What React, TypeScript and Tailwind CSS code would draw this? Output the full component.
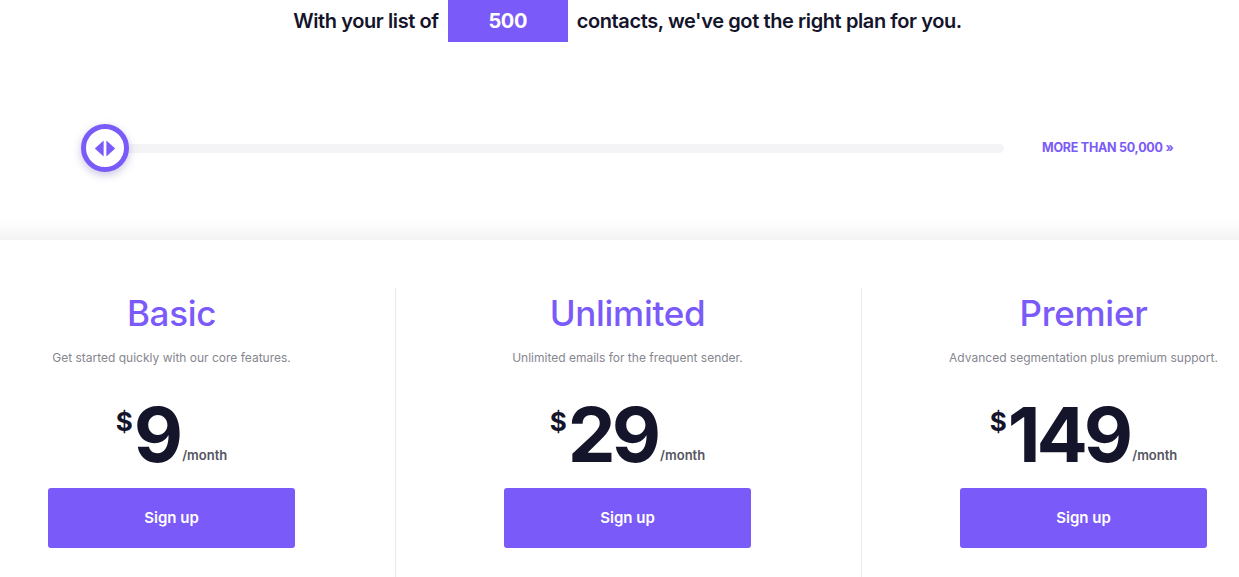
import { useState } from 'react'

const plans = [
  { name: 'Basic', desc: 'Get started quickly with our core features.', price: '9' },
  { name: 'Unlimited', desc: 'Unlimited emails for the frequent sender.', price: '29' },
  { name: 'Premier', desc: 'Advanced segmentation plus premium support.', price: '149' },
]

function PlanColumn({ plan, className }: { plan: typeof plans[number]; className: string }) {
  return (
    <div className={className}>
      <div className="w-[247px] flex flex-col items-center">
        <h2 className="text-[35px] leading-[44px] font-medium text-[#7a5af8] tracking-[-0.3px]">{plan.name}</h2>
        <p className="mt-[13px] text-[12px] leading-[20px] text-[#86868f] whitespace-nowrap">{plan.desc}</p>
        <div className="mt-[28px] flex items-start text-[#14142b]">
          <span className="text-[26px] leading-none font-bold mt-[13px] mr-[1px]">$</span>
          <span className="text-[76px] leading-none font-bold tracking-[-4px]">{plan.price}</span>
          <span className="self-end mb-[7px] ml-[3px] text-[13px] font-semibold text-[#55555f]">/month</span>
        </div>
        <button className="mt-[16px] w-[247px] h-[60px] rounded-[3px] bg-[#7a5af8] text-white text-[15px] font-semibold">
          Sign up
        </button>
      </div>
    </div>
  )
}

export default function App() {
  const [contacts] = useState(500)

  return (
    <div className="w-[1239px] h-[577px] overflow-hidden bg-white font-['Inter','Liberation_Sans',sans-serif]">
      {/* contact picker */}
      <div className="h-[220px]">
        <div className="flex items-center justify-center h-[42px] pl-[16px] text-[20px] font-semibold text-[#14142b] tracking-[-0.4px]">
          <span>With your list of</span>
          <div className="ml-[9px] w-[120px] h-[42px] bg-[#7a5af8] flex items-center justify-center text-white text-[20px] font-bold">
            {contacts}
          </div>
          <span className="ml-[9px]">contacts, we've got the right plan for you.</span>
        </div>

        <div className="mt-[82px] flex items-center pl-[81px]">
          <div className="relative flex-none w-[48px] h-[48px] rounded-full border-[5px] border-[#7a5af8] bg-white shadow-[0_3px_8px_rgba(80,60,160,0.3)] flex items-center justify-center z-10">
            <svg width="22" height="17" viewBox="0 0 22 17" fill="#7a5af8">
              <path d="M9.6 0.5 L0.8 8.5 L9.6 16.5 Z" />
              <path d="M12.4 0.5 L21.2 8.5 L12.4 16.5 Z" />
            </svg>
          </div>
          <div className="-ml-[2px] w-[877px] h-[9px] rounded-full bg-[#f4f4f7]" />
          <a className="ml-[38px] text-[12.5px] font-bold text-[#7a5af8] tracking-[-0.25px] uppercase">
            More than 50,000 »
          </a>
        </div>
      </div>

      <div className="h-[20px] bg-gradient-to-b from-white to-[#f3f3f3]" />

      {/* plans */}
      <div className="flex pt-[48px]">
        <PlanColumn plan={plans[0]} className="w-[395px] h-[300px] flex pl-[48px] pt-[3px]" />
        <PlanColumn plan={plans[1]} className="w-[466px] h-[300px] flex pl-[108px] pt-[3px] border-l border-[#e9e9ec]" />
        <PlanColumn plan={plans[2]} className="flex-1 h-[300px] flex pl-[98px] pt-[3px] border-l border-[#e9e9ec]" />
      </div>
    </div>
  )
}
